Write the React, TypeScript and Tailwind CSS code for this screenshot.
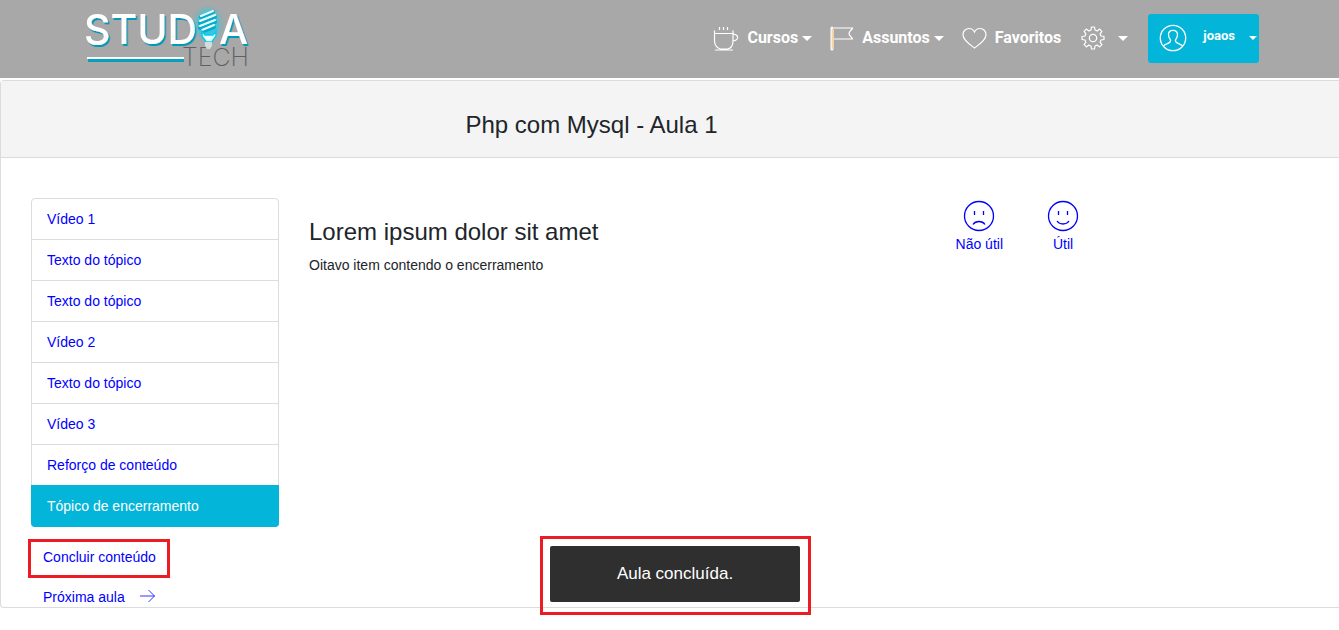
import React from "react";

const topics = [
  "Vídeo 1",
  "Texto do tópico",
  "Texto do tópico",
  "Vídeo 2",
  "Texto do tópico",
  "Vídeo 3",
  "Reforço de conteúdo",
  "Tópico de encerramento",
];

function Caret({ small = false }: { small?: boolean }) {
  return (
    <svg className={small ? "h-1 w-2 shrink-0" : "h-[5px] w-[10px] shrink-0"} viewBox="0 0 10 5" fill="currentColor" aria-hidden="true">
      <path d="M0 0h10L5 5z" />
    </svg>
  );
}

function Logo() {
  return (
    <a href="#" aria-label="Studia Tech" className="block">
      <svg className="h-[70px] w-[176px]" viewBox="0 0 176 70" role="img" aria-label="Studia Tech">
        <defs>
          <filter id="glow" x="-60%" y="-30%" width="220%" height="160%">
            <feGaussianBlur stdDeviation="3" />
          </filter>
          <filter id="edge" x="-5%" y="-10%" width="115%" height="130%">
            <feDropShadow dx="1.5" dy="2" stdDeviation="0.6" floodColor="#0099b8" />
          </filter>
        </defs>
        <g fill="#fff" fontFamily="Inter, 'Liberation Sans', sans-serif" fontSize="41" fontWeight="500" filter="url(#edge)">
          <text x="4" y="41">STUD</text>
          <text x="139" y="41">A</text>
        </g>
        <path d="M8 57.500h96" stroke="#0a9fbd" strokeWidth="3" />
        <path d="M7 55h97" stroke="#f4ffff" strokeWidth="2" />
        <text x="102" y="63" fill="#606060" fontFamily="Inter, Lato, sans-serif" fontSize="25" fontWeight="200">
          TECH
        </text>
        <ellipse cx="128" cy="21" rx="11" ry="14" fill="#18cfee" opacity=".9" filter="url(#glow)" />
        <g fill="none" strokeLinecap="round">
          <path d="M121 14l12-5M120 20l15-6M120 25l15-6M123 28l11-4" stroke="#06acc9" strokeWidth="4" />
          <path d="M121 13l12-5M120 18l15-6M120 23l15-6M122 27l12-5" stroke="#eaffff" strokeWidth="2" />
        </g>
        <path d="M122 28v4c0 3 3 4 4 7h6c1-3 4-4 4-7v-4l-3 4h-8z" fill="#e9ffff" stroke="#08cceb" strokeWidth="1.5" />
        <path d="M125 39h7v4l-2 3h-3l-2-3z" fill="#d0dddd" />
      </svg>
    </a>
  );
}

function CupIcon() {
  return (
    <svg className="h-[26px] w-[26px]" viewBox="0 0 26 26" fill="none" stroke="currentColor" strokeWidth="1.2" aria-hidden="true">
      <path d="M1.500 5.500v10c0 5 3 8 6 8.500h7c3-.5 5.500-3.500 5.500-8.500v-10M1.500 8.500H20M2 25h18M20 9c2 .2 4 1 4.500 2.500.8 2-1 4-4.500 4.500M6.500 2v3M10.500 2v3M14.500 2v3" />
    </svg>
  );
}

function FlagIcon() {
  return (
    <svg className="h-[26px] w-[24px]" viewBox="0 0 24 26" fill="none" aria-hidden="true">
      <path d="M2 3v21" stroke="#fff" strokeWidth="3" strokeLinecap="round" />
      <path d="M2.500 3.500v20.500" stroke="#ffd49a" strokeWidth="1.800" />
      <path d="M4 3h18.500c-.5 2-3.500 3-3.500 5.500s3 3.500 3.500 5.500H4" stroke="#fff" strokeWidth="1.200" />
    </svg>
  );
}

function HeartIcon() {
  return (
    <svg className="h-[22px] w-[25px]" viewBox="0 0 25 22" fill="none" stroke="currentColor" strokeWidth="1.200" aria-hidden="true">
      <path d="M12.500 21C10 19 1 13.500 1 7.700 1 4.100 3.600 1.500 7 1.500c2.400 0 4.500 1.300 5.500 3.500 1-2.200 3.100-3.500 5.500-3.500 3.400 0 6 2.600 6 6.200 0 5.800-9 11.300-11.500 13.300z" />
    </svg>
  );
}

function GearIcon() {
  return (
    <svg className="h-[24px] w-[24px]" viewBox="0 0 24 24" fill="none" stroke="currentColor" strokeWidth="1.200" strokeLinejoin="round" aria-hidden="true">
      <circle cx="12" cy="12" r="3.700" />
      <path d="M10.500 1h3l.5 3 2.200.9 2.500-1.800 2.200 2.200-1.800 2.500.9 2.200 3 .5v3l-3 .5-.9 2.200 1.800 2.500-2.200 2.200-2.500-1.800-2.200.9-.5 3h-3l-.5-3-2.200-.9-2.500 1.800-2.200-2.200 1.800-2.500L4 14l-3-.5v-3l3-.5.9-2.200-1.800-2.500 2.200-2.200 2.500 1.800L10 4z" />
    </svg>
  );
}

function UserIcon() {
  return (
    <svg className="h-[28px] w-[28px]" viewBox="0 0 28 28" fill="none" stroke="currentColor" strokeWidth="1.300" aria-hidden="true">
      <circle cx="14" cy="14" r="12.700" />
      <path d="M4.500 22c1-1.500 5-2.500 6.500-4 .8-1 .8-2 0-3-1-1.200-1.500-2.500-1.500-4.500 0-3 1.700-4.200 4.500-4.200s4.500 1.200 4.500 4.200c0 2-.5 3.300-1.500 4.500-.8 1-.8 2 0 3 1.500 1.500 5.500 2.500 6.500 4" />
    </svg>
  );
}

function Face({ happy }: { happy: boolean }) {
  return (
    <svg className="h-8 w-8" viewBox="0 0 32 32" fill="none" stroke="currentColor" strokeWidth="1.300" aria-hidden="true">
      <circle cx="16" cy="16" r="14.500" />
      <path d="M11.500 11v4M20.500 11v4" />
      {happy ? <path d="M10 21c1.500 2.200 3.500 3 6 3s4.500-.8 6-3" /> : <path d="M10 24.500c1.500-2.200 3.500-3 6-3s4.500.8 6 3" />}
    </svg>
  );
}

function Header() {
  return (
    <header className="flex h-[78px] items-center justify-between bg-[#a8a8a8] px-20 pb-[2px] text-white">
      <Logo />
      <nav className="flex items-center font-['Roboto',sans-serif] text-[16px] font-bold">
        <button type="button" className="flex items-center gap-2">
          <CupIcon />
          Cursos
          <span className="-ml-1"><Caret /></span>
        </button>
        <button type="button" className="ml-[18px] flex items-center gap-2">
          <FlagIcon />
          Assuntos
          <span className="-ml-1"><Caret /></span>
        </button>
        <a href="#" className="ml-[18px] flex items-center gap-2">
          <HeartIcon />
          Favoritos
        </a>
        <button type="button" aria-label="Configurações" className="ml-5 flex items-center gap-[13px]">
          <GearIcon />
          <Caret />
        </button>
        <button type="button" className="ml-5 flex h-[49px] items-center rounded-[3px] bg-[#03b5d8] pr-[2px] pl-[11px] text-[13px]">
          <UserIcon />
          <span className="mr-[14px] ml-4 pb-1">joaos</span>
          <Caret small />
        </button>
      </nav>
    </header>
  );
}

function Sidebar() {
  return (
    <aside className="w-[251px] shrink-0">
      <ul className="ml-[3px] rounded border border-[#dcdcdc] text-[#00f]">
        {topics.map((topic, i) =>
          i === topics.length - 1 ? (
            <li key={i} className="-m-px rounded-b bg-[#03b5d8] text-white">
              <a href="#" aria-current="page" className="block px-4 py-[11px]">{topic}</a>
            </li>
          ) : (
            <li key={i} className="border-b border-[#dcdcdc]">
              <a href="#" className="block px-[15px] py-[10px]">{topic}</a>
            </li>
          ),
        )}
      </ul>
      <div className="mt-3 flex flex-col items-start text-[#00f]">
        <button type="button" className="border-3 border-[#ec1c24] pt-[5px] pr-[11px] pb-2 pl-3">
          Concluir conteúdo
        </button>
        <a href="#" className="mt-[9px] flex items-center gap-[15px] pl-[15px]">
          Próxima aula
          <svg className="h-[14px] w-[15px]" viewBox="0 0 15 14" fill="none" stroke="currentColor" strokeWidth=".8" aria-hidden="true">
            <path d="M0 6h14.500M8.500 0L14.500 6l-6 6" />
          </svg>
        </a>
      </div>
    </aside>
  );
}

export default function App() {
  return (
    <div className="min-h-screen bg-white font-['Liberation_Sans',Arial,sans-serif] text-[14px] leading-5 text-[#212529]">
      <Header />
      <main className="mt-[2px] rounded-l border-y border-l border-[#dcdcdc]">
        <div className="border-b border-[#dcdcdc] bg-[#f4f4f4] pt-7 pr-[157px] pb-4 text-center">
          <h1 className="text-[24px] leading-8">Php com Mysql - Aula 1</h1>
        </div>
        <div className="flex pt-10 pl-[27px]">
          <Sidebar />
          <article className="ml-[30px] grow pt-[18px]">
            <h2 className="text-[24px] leading-8">Lorem ipsum dolor sit amet</h2>
            <p className="mt-[7px]">Oitavo item contendo o encerramento</p>
          </article>
          <div className="mr-[260px] flex items-start gap-11 pt-[2px] text-[#00f]">
            <button type="button" className="flex flex-col items-center gap-[2px]">
              <Face happy={false} />
              Não útil
            </button>
            <button type="button" className="flex flex-col items-center gap-[2px]">
              <Face happy />
              Útil
            </button>
          </div>
        </div>
      </main>
      <div className="fixed inset-x-0 bottom-[15px] flex justify-center pl-3">
        <div className="border-3 border-[#ec1c24] pt-[7px] pr-2 pb-[10px] pl-[7px]">
          <div role="status" className="min-w-[250px] rounded-[2px] bg-[#2f2f2f] p-4 text-center text-[17px] leading-6 text-white">
            Aula concluída.
          </div>
        </div>
      </div>
    </div>
  );
}
